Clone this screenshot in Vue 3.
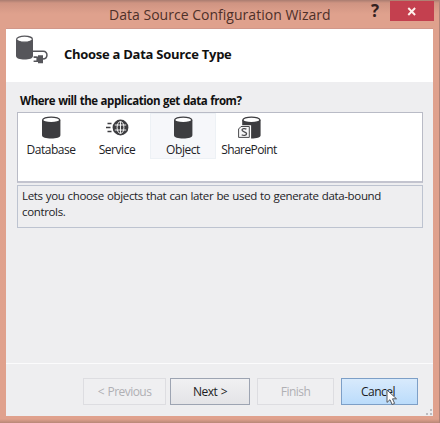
<script setup>
const sources = [
  { label: 'Database', kind: 'db' },
  { label: 'Service', kind: 'service' },
  { label: 'Object', kind: 'db', selected: true },
  { label: 'SharePoint', kind: 'sharepoint' },
]
</script>

<template>
  <div class="window">
    <header class="titlebar">
      <span class="title">Data Source Configuration Wizard</span>
      <span class="help">?</span>
      <button class="close" aria-label="Close">
        <svg width="10" height="9" viewBox="0 0 10 9"><path d="M1.3 1 8.1 8M8.1 1 1.3 8" stroke="#fff1ed" stroke-width="1.9" /></svg>
      </button>
    </header>
    <main class="dialog">
      <section class="heading">
        <svg class="heading-icon" width="34" height="30" viewBox="0 0 34 30">
          <path d="M1 4.2V21c0 2.4 4 3.6 8.5 3.6S18 23.4 18 21V4.2z" fill="#55555a" />
          <ellipse cx="9.5" cy="4.2" rx="7.9" ry="3" fill="#fff" stroke="#55555a" stroke-width="1.2" />
          <path d="M18 16.2h10.2c5.2 0 5 7.8-.6 7.8" fill="none" stroke="#55555a" stroke-width="1.5" />
          <path d="M23 20.2h5v8h-5v-1.3h-1.6v-5.4H23zM18.6 21.3h3.2V23h-3.2zM18.6 25.4h3.2v1.7h-3.2z" fill="#55555a" />
        </svg>
        <h1>Choose a Data Source Type</h1>
      </section>
      <section class="body">
        <h2>Where will the application get data from?</h2>
        <div class="list">
          <div v-for="s in sources" :key="s.label" class="item" :class="{ selected: s.selected }">
            <svg width="26" height="24" viewBox="0 0 26 24">
              <g v-if="s.kind === 'service'">
                <path d="M3.5 7.5h4M2 11.5h4.5M3.5 15.5h4" stroke="#3d3d40" stroke-width="1.3" />
                <circle cx="16.5" cy="11.5" r="7.9" fill="#3d3d40" />
                <path d="M10.8 9h11.4M10.8 14h11.4M16.5 5.5v12" stroke="#fff" stroke-width=".9" />
                <ellipse cx="16.5" cy="11.5" rx="3.4" ry="6" fill="none" stroke="#fff" stroke-width=".9" />
              </g>
              <g v-else :transform="s.kind === 'sharepoint' ? 'translate(2.2 0)' : ''">
                <path d="M4 3.8v15.5c0 2.1 4 3.2 9.2 3.2s9.2-1.1 9.2-3.2V3.8z" fill="#3d3d40" />
                <ellipse cx="13.2" cy="3.9" rx="8.5" ry="2.8" fill="#fff" stroke="#3d3d40" stroke-width="1.3" />
              </g>
              <g v-if="s.kind === 'sharepoint'">
                <path d="M4.8 10.5h9v11.2H2.2v-8.6z" fill="#f7f7f8" stroke="#fff" stroke-width="2.6" />
                <path d="M5 10.5h8.3v10.9H2.6v-8.4z" fill="#f7f7f8" stroke="#4b4b4e" stroke-width="1" />
                <path d="M10.4 13.1c-1.5-.9-4.4-.6-4.4 1 0 2 4.6 1.4 4.6 3.6 0 1.9-3.2 2-4.9 1" fill="none" stroke="#4b4b4e" stroke-width="1.3" />
              </g>
            </svg>
            <span>{{ s.label }}</span>
          </div>
        </div>
        <p class="description">Lets you choose objects that can later be used to generate data-bound<br />controls.</p>
      </section>
      <footer>
        <button class="previous" disabled>&lt; Previous</button>
        <button class="next">Next &gt;</button>
        <button class="finish" disabled>Finish</button>
        <button class="cancel">Cancel</button>
        <svg class="grip" width="6" height="6" viewBox="0 0 6 6"><path d="M4 0h2v2H4zM0 4h2v2H0zM4 4h2v2H4z" fill="#bcbcc0" /></svg>
        <svg class="cursor" width="13" height="18" viewBox="0 0 13 18"><path d="M1 1v12.4l3-2.7 2.1 4.8 2.5-1.1-2.1-4.6h4z" fill="#fff" stroke="#53565d" stroke-width="1" /></svg>
      </footer>
    </main>
  </div>
</template>

<style>
body { margin: 0; overflow: hidden; }
</style>

<style scoped>
* { box-sizing: border-box; }
.window { width: 440px; height: 423px; padding: 0 6px 7px 6px; display: flex; flex-direction: column; font-family: "Open Sans", sans-serif; font-size: 12px; color: #222226; background: linear-gradient(#a97c70 0, #cf9482 3px, #dfa18d 14px, #e0a18d 419px, #b88778 423px); border-right: 1px solid #b08378; }
.titlebar { height: 29px; display: flex; flex: none; border-bottom: 1px solid #d1978a; }
.title { width: 365px; padding-left: 103px; font-size: 14px; line-height: 30px; letter-spacing: .02px; color: #4e3029; white-space: nowrap; flex: none; }
.help { width: 19px; font: bold 17px/22px "Open Sans", sans-serif; color: #33211f; flex: none; }
.close { width: 44px; height: 20px; margin-top: 1px; padding: 0; border: 0; background: #c4404f; display: flex; align-items: center; justify-content: center; flex: none; }
.dialog { flex: 1; background: #eeeef0; display: flex; flex-direction: column; }
.heading { height: 53px; background: #fff; padding: 6px 0 0 9px; display: flex; flex: none; }
h1, h2, p { margin: 0; }
h1 { margin-left: 15px; font-size: 13px; line-height: 38px; letter-spacing: -.27px; color: #111; white-space: nowrap; }
.body { padding: 10px 10px 0 11px; height: 282px; border-bottom: 1px solid #fbfbfc; }
h2 { padding-left: 3px; height: 20px; font-size: 11.5px; line-height: 18px; letter-spacing: -.47px; word-spacing: .5px; color: #111; white-space: nowrap; }
.list { height: 71px; border: 1px solid #b9bbc6; border-bottom: 2px solid #c3c4cf; background: #fff; display: flex; }
.item { width: 66px; height: 46px; padding-top: 3px; display: flex; flex-direction: column; align-items: center; flex: none; }
.item span { font-size: 12px; line-height: 20px; letter-spacing: -.45px; white-space: nowrap; }
.item svg { flex: none; }
.selected { background: #f6f7fa; border: 1px solid #edf1f5; padding-top: 2px; }
.item:nth-child(4) span { letter-spacing: -.6px; }
.description { height: 43px; margin-top: 2px; padding: 2px 4px; border: 1px solid #bdc3d0; font-size: 11.5px; line-height: 16px; letter-spacing: -.35px; word-spacing: .5px; white-space: nowrap; }
footer { flex: 1; position: relative; padding: 14px 16px 0 77px; display: flex; align-items: flex-start; }
footer button { height: 27px; padding: 0 0 1px; border: 1px solid #9da4b2; background: linear-gradient(#f0f0f2, #e4e4e7); font: 12px "Open Sans", sans-serif; letter-spacing: -.55px; word-spacing: 1px; color: #1c1c22; white-space: nowrap; flex: none; }
footer button:disabled { color: #b0b0b4; border-color: #dddde1; background: #efeff1; }
.previous { width: 83px; margin-right: 4px; }
.next { width: 80px; margin-right: 7px; }
.finish { width: 77px; margin-right: 7px; }
footer .cancel { width: 77px; padding-right: 3px; background: linear-gradient(#d8eafc, #bbdcfb); border-color: #7d9fc7; }
.grip { position: absolute; right: 1px; bottom: 1px; }
.cursor { position: absolute; left: 380px; top: 25px; }
</style>
